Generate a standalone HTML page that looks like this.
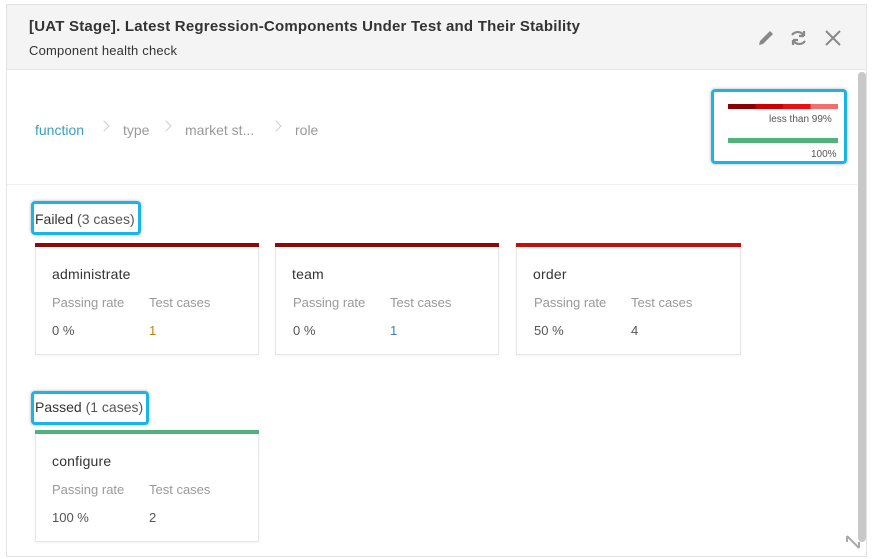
<!DOCTYPE html><html><head><style>
*{margin:0;padding:0;box-sizing:border-box}
body{width:872px;height:559px;background:#fff;font-family:"Liberation Sans",sans-serif;position:relative;overflow:hidden;color:#333}
.a{position:absolute;white-space:nowrap}
.card{position:absolute;border:1px solid #e6e6e6;border-top:none;background:#fff;box-shadow:0 1px 2px rgba(0,0,0,.05)}
.card .bar{position:absolute;left:-1px;right:-1px;top:0;height:4px}
.card .n{position:absolute;left:16px;top:23px;font-size:14px;color:#333;letter-spacing:.2px}
.card .l{position:absolute;top:52px;font-size:13px;color:#999}
.card .v{position:absolute;top:80px;font-size:13px;color:#555}
.hl{position:absolute;border:3px solid #1bb4ea;border-radius:4px;box-shadow:0 0 3px rgba(0,0,0,.3)}
.sep{position:absolute;top:122px;width:8px;height:8px;border-top:1px solid #ccc;border-right:1px solid #ccc;transform:rotate(45deg)}
</style></head><body>
<div class="a" style="left:6px;top:4px;width:861px;height:553px;border:1px solid #e3e3e3"></div>
<div class="a" style="left:7px;top:5px;width:859px;height:65px;background:#f4f4f4;border-bottom:1px solid #e6e6e6"></div>
<div class="a" style="left:29px;top:18px;font-size:15px;font-weight:bold;color:#333;letter-spacing:0.22px">[UAT Stage]. Latest Regression-Components Under Test and Their Stability</div>
<div class="a" style="left:29px;top:43px;font-size:13px;color:#333;letter-spacing:.2px">Component health check</div>
<svg class="a" style="left:756px;top:27px" width="86" height="22" viewBox="0 0 86 22">
<path d="M3 18 L4 14 L14 4 L17 7 L7 17 Z" fill="#888"/>
<path d="M36 8 A7 7 0 0 1 48 9 M48 9 L48 4 M48 9 L43 9 M49 14 A7 7 0 0 1 37 13 M37 13 L37 18 M37 13 L42 13" stroke="#888" stroke-width="2.2" fill="none"/>
<path d="M70 4 L84 18 M84 4 L70 18" stroke="#888" stroke-width="2"/>
</svg>
<div class="a" style="left:858px;top:72px;width:8px;height:470px;background:#c8c8c8;border-radius:4px"></div>
<div class="a" style="left:7px;top:184px;width:850px;height:1px;background:#f0f0f0"></div>
<div class="a" style="left:35px;top:122px;font-size:14px;color:#3a9fc0">function</div>
<div class="sep" style="left:100px"></div>
<div class="a" style="left:123px;top:122px;font-size:14px;color:#999">type</div>
<div class="sep" style="left:162px"></div>
<div class="a" style="left:185px;top:122px;font-size:14px;color:#999">market st...</div>
<div class="sep" style="left:272px"></div>
<div class="a" style="left:295px;top:122px;font-size:14px;color:#999">role</div>
<div class="hl" style="left:711px;top:89px;width:136px;height:75px"></div>
<div class="a" style="left:728px;top:104px;width:110px;height:5px;background:linear-gradient(90deg,#8b0000 0 25%,#c00 25% 50%,#e81010 50% 75%,#f07070 75%)"></div>
<div class="a" style="left:769px;top:114px;font-size:10px;color:#555">less than 99%</div>
<div class="a" style="left:728px;top:138px;width:110px;height:5px;background:#52b27e"></div>
<div class="a" style="left:811px;top:149px;font-size:10px;color:#555">100%</div>
<div class="hl" style="left:31px;top:201px;width:110px;height:34px"></div>
<div class="a" style="left:35px;top:211px;font-size:14px;color:#333">Failed <span style="color:#555">(3 cases)</span></div>
<div class="card" style="left:35px;top:243px;width:224px;height:112px"><div class="bar" style="background:#8b0a0a"></div><div class="n">administrate</div><div class="l" style="left:16px">Passing rate</div><div class="l" style="left:113px">Test cases</div><div class="v" style="left:16px">0 %</div><div class="v" style="left:113px;color:#b8860b">1</div></div>
<div class="card" style="left:275px;top:243px;width:224px;height:112px"><div class="bar" style="background:#8b0a0a"></div><div class="n">team</div><div class="l" style="left:17px">Passing rate</div><div class="l" style="left:114px">Test cases</div><div class="v" style="left:17px">0 %</div><div class="v" style="left:114px;color:#3a7fc0">1</div></div>
<div class="card" style="left:516px;top:243px;width:225px;height:112px"><div class="bar" style="background:#c01010"></div><div class="n">order</div><div class="l" style="left:17px">Passing rate</div><div class="l" style="left:114px">Test cases</div><div class="v" style="left:17px">50 %</div><div class="v" style="left:114px">4</div></div>
<div class="hl" style="left:31px;top:391px;width:118px;height:34px"></div>
<div class="a" style="left:35px;top:399px;font-size:14px;color:#333">Passed <span style="color:#555">(1 cases)</span></div>
<div class="card" style="left:35px;top:430px;width:224px;height:112px"><div class="bar" style="background:#52b27e"></div><div class="n">configure</div><div class="l" style="left:16px">Passing rate</div><div class="l" style="left:113px">Test cases</div><div class="v" style="left:16px">100 %</div><div class="v" style="left:113px">2</div></div>
<svg class="a" style="left:845px;top:534px" width="18" height="18"><path d="M2 2 L14 14 M2 2 L2 8 M14 14 L14 8" stroke="#aaa" stroke-width="2" fill="none"/></svg>
</body></html>
